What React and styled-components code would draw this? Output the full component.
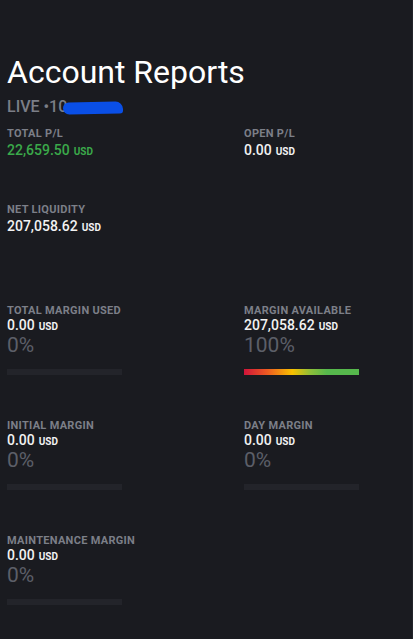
import React from "react";
import styled, { createGlobalStyle } from "styled-components";

const GlobalStyle = createGlobalStyle`
  html, body {
    margin: 0;
    padding: 0;
    background: #1a1b20;
  }
  body {
    font-family: Roboto, "Liberation Sans", Arial, sans-serif;
    -webkit-font-smoothing: antialiased;
  }
`;

const summary = [
  { label: "TOTAL P/L", value: "22,659.50", positive: true },
  { label: "OPEN P/L", value: "0.00" },
  { label: "NET LIQUIDITY", value: "207,058.62" },
];

const margins = [
  { label: "TOTAL MARGIN USED", value: "0.00", pct: 0 },
  { label: "MARGIN AVAILABLE", value: "207,058.62", pct: 100, gradient: true },
  { label: "INITIAL MARGIN", value: "0.00", pct: 0 },
  { label: "DAY MARGIN", value: "0.00", pct: 0 },
  { label: "MAINTENANCE MARGIN", value: "0.00", pct: 0 },
];

const Amount = ({ value, positive, spaced }) => (
  <Value $positive={positive} $spaced={spaced}>
    {value}
    <Currency>USD</Currency>
  </Value>
);

const App = () => {
  return (
    <>
      <GlobalStyle />
      <Page>
        <Header>
          <Title>Account Reports</Title>
          <AccountLine>
            LIVE •10
            <Redacted />
          </AccountLine>
        </Header>

        <Grid>
          {summary.slice(0, 2).map((s) => (
            <Stat key={s.label}>
              <Label>{s.label}</Label>
              <Amount value={s.value} positive={s.positive} spaced />
            </Stat>
          ))}
        </Grid>
        <Grid $top={45} $bottom={70}>
          <Stat>
            <Label>{summary[2].label}</Label>
            <Amount value={summary[2].value} spaced />
          </Stat>
        </Grid>

        <Grid $rowGap={44}>
          {margins.map((m) => (
            <Stat key={m.label}>
              <Label>{m.label}</Label>
              <Amount value={m.value} />
              <Percent>{m.pct}%</Percent>
              <Bar>
                {m.gradient && <Fill style={{ width: `${m.pct}%` }} />}
              </Bar>
            </Stat>
          ))}
        </Grid>
      </Page>
    </>
  );
};

export default App;

const Page = styled.div`
  min-height: 639px;
  box-sizing: border-box;
  padding: 53px 0 0 7px;
  border-right: 1px solid #23242a;
`;

const Header = styled.header`
  display: flex;
  flex-direction: column;
  gap: 6px;
  margin-bottom: 10px;
`;

const Title = styled.h1`
  margin: 0;
  font-size: 32px;
  line-height: 38px;
  font-weight: 400;
  color: #ffffff;
`;

const AccountLine = styled.div`
  display: flex;
  align-items: center;
  height: 20px;
  font-size: 16px;
  line-height: 20px;
  font-weight: 500;
  color: #7b7e87;
`;

const Redacted = styled.span`
  display: inline-block;
  width: 60px;
  height: 12px;
  margin-left: -4px;
  margin-top: 1px;
  background: #0a4fe6;
  border-radius: 9px 12px 5px 10px;
  transform: rotate(-1deg);
`;

const Grid = styled.section`
  display: grid;
  grid-template-columns: 237px 1fr;
  row-gap: ${(p) => p.$rowGap || 0}px;
  margin-top: ${(p) => p.$top || 0}px;
  margin-bottom: ${(p) => p.$bottom || 0}px;
`;

const Stat = styled.div`
  display: flex;
  flex-direction: column;
`;

const Label = styled.div`
  font-size: 11px;
  line-height: 13px;
  font-weight: 700;
  letter-spacing: 0.3px;
  color: #7c7f88;
  white-space: nowrap;
`;

const Value = styled.div`
  height: 16px;
  font-size: 14px;
  line-height: 16px;
  font-weight: 500;
  margin-top: ${(p) => (p.$spaced ? 2 : 0)}px;
  color: ${(p) => (p.$positive ? "#3aa94a" : "#f2f2f2")};
  white-space: nowrap;
`;

const Currency = styled.span`
  font-size: 10px;
  line-height: 0;
  font-weight: 700;
  margin-left: 4px;
`;

const Percent = styled.div`
  height: 24px;
  font-size: 21px;
  line-height: 24px;
  font-weight: 400;
  color: #5c5f68;
`;

const Bar = styled.div`
  width: 115px;
  height: 6px;
  margin-top: 12px;
  background: #23242a;
`;

const Fill = styled.div`
  height: 100%;
  background: linear-gradient(
    90deg,
    #d0143a 0%,
    #ee5a22 20%,
    #f8c100 42%,
    #8cbf3a 58%,
    #56b84c 72%,
    #56b84c 100%
  );
`;
